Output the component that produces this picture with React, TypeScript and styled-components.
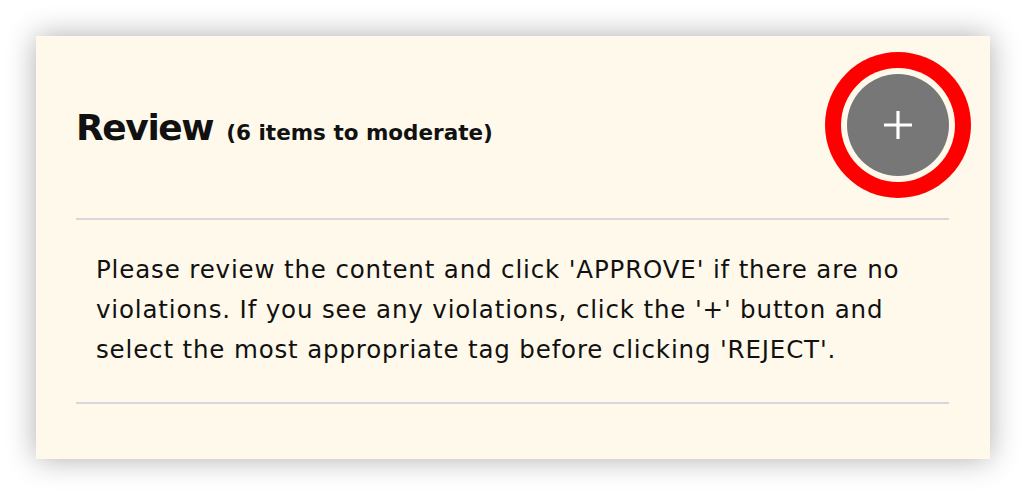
import styled, { createGlobalStyle } from 'styled-components';

const GlobalStyle = createGlobalStyle`
  html, body {
    margin: 0;
    padding: 0;
    background: #ffffff;
  }
  body {
    font-family: "DejaVu Sans", "Noto Sans", sans-serif;
    color: #111111;
  }
`;

const Page = styled.div`
  padding: 36px;
  width: 954px;
`;

const Card = styled.section`
  background-color: #fef9ea;
  padding: 0 41px 55px 40px;
  box-shadow: 0 0 28px rgba(0, 0, 0, 0.32);
`;

const Header = styled.header`
  display: flex;
  align-items: center;
  justify-content: space-between;
  padding: 38px 0 42px;
`;

const Title = styled.h2`
  margin: 0 0 -4px;
  display: flex;
  align-items: baseline;
  gap: 13px;
  font-size: 36px;
  font-weight: 700;
  letter-spacing: -1.4px;
`;

const Count = styled.span`
  font-size: 21.5px;
  font-weight: 700;
  letter-spacing: 0;
`;

const AddButton = styled.button`
  width: 102px;
  height: 102px;
  border-radius: 50%;
  border: none;
  background-color: #777777;
  display: flex;
  align-items: center;
  justify-content: center;
  padding: 0;
  box-shadow: 0 0 0 6px #fef9ea, 0 0 0 22px #ff0000;
  cursor: pointer;
`;

const Divider = styled.hr`
  margin: 0;
  border: none;
  height: 2px;
  background-color: #d7d6dc;
`;

const Instructions = styled.p`
  margin: 0;
  padding: 30px 20px 32px;
  font-size: 24.5px;
  line-height: 40px;
  letter-spacing: 0.85px;
  font-weight: 400;
`;

const App = () => {
  return (
    <Page>
      <GlobalStyle />
      <Card>
        <Header>
          <Title>
            Review <Count>(6 items to moderate)</Count>
          </Title>
          <AddButton aria-label="Add tag">
            <svg width="30" height="30" viewBox="0 0 30 30">
              <path d="M15 1v28M1 15h28" stroke="#ffffff" strokeWidth="3.2" />
            </svg>
          </AddButton>
        </Header>
        <Divider />
        <Instructions>
          Please review the content and click 'APPROVE' if there are no
          violations. If you see any violations, click the '+' button and
          select the most appropriate tag before clicking 'REJECT'.
        </Instructions>
        <Divider />
      </Card>
    </Page>
  );
};

export default App;
